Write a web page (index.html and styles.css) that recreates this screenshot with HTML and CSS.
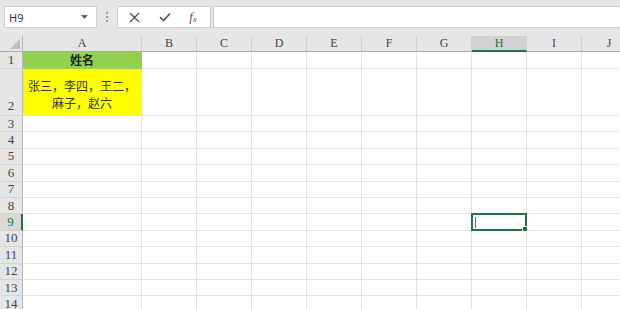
FILE: index.html
```html
<!DOCTYPE html>
<html lang="zh-CN">
<head>
    <meta http-equiv="Content-Type" content="text/html; charset=UTF-8">
    <meta name="viewport" content="width=device-width, initial-scale=1.0">
    <title>工作簿</title>
    <link rel="stylesheet" href="styles.css">
</head>
<body>
    <div class="toolbar">
        <div class="namebox">
            <span>H9</span>
            <svg class="caret" width="7" height="4" viewBox="0 0 7 4"><path d="M0 0h7L3.5 4z" fill="#666" /></svg>
        </div>
        <div class="dots"><i></i><i></i><i></i></div>
        <div class="fbuttons">
            <svg width="11" height="11" viewBox="0 0 11 11">
                <path d="M1 1l9 9M10 1l-9 9" stroke="#555" stroke-width="1.4" fill="none" />
            </svg>
            <svg width="12" height="10" viewBox="0 0 12 10">
                <path d="M1 5l3.5 3.5L11 1.5" stroke="#555" stroke-width="1.6" fill="none" />
            </svg>
            <span class="fx">f<sub>x</sub></span>
        </div>
        <div class="finput"></div>
    </div>

    <div class="sheet" id="sheet">
        <div class="corner"><span class="tri"></span></div>
        <div class="colhead">A</div>
        <div class="colhead">B</div>
        <div class="colhead">C</div>
        <div class="colhead">D</div>
        <div class="colhead">E</div>
        <div class="colhead">F</div>
        <div class="colhead">G</div>
        <div class="colhead active">H</div>
        <div class="colhead">I</div>
        <div class="colhead">J</div>

        <div class="rowhead">1</div>
        <div class="cell title">姓名</div>
        <div class="cell"></div><div class="cell"></div><div class="cell"></div><div class="cell"></div>
        <div class="cell"></div><div class="cell"></div><div class="cell"></div><div class="cell"></div><div class="cell"></div>

        <div class="rowhead bottom">2</div>
        <div class="cell names">张三，李四，王二，<br>麻子，赵六</div>
        <div class="cell"></div><div class="cell"></div><div class="cell"></div><div class="cell"></div>
        <div class="cell"></div><div class="cell"></div><div class="cell"></div><div class="cell"></div><div class="cell"></div>
    </div>

    <script>
        // empty rows 3..14, row 9 holds the selected cell H9
        var sheet = document.getElementById('sheet');
        for (var r = 3; r <= 14; r++) {
            var head = document.createElement('div');
            head.className = r === 9 ? 'rowhead active' : 'rowhead';
            head.textContent = r;
            sheet.appendChild(head);
            for (var c = 0; c < 10; c++) {
                var cell = document.createElement('div');
                cell.className = 'cell';
                if (r === 9 && c === 7) {
                    cell.className = 'cell selected';
                    cell.innerHTML = '<span class="caret-line"></span><span class="handle"></span>';
                }
                sheet.appendChild(cell);
            }
        }
    </script>
</body>
</html>
```

FILE: styles.css
```css
body {
    margin: 0;
    width: 620px;
    height: 309px;
    overflow: hidden;
    background-color: #fff;
    font-family: "Liberation Serif", "Noto Sans CJK SC", serif;
}

.toolbar {
    height: 36px;
    background-color: #e6e6e6;
    display: flex;
    align-items: flex-start;
    padding-top: 6px;
    box-sizing: border-box;
}

.namebox {
    margin-left: 4px;
    width: 93px;
    height: 22px;
    background-color: #fff;
    border: 1px solid #d0d0d0;
    box-sizing: border-box;
    display: flex;
    align-items: center;
    justify-content: space-between;
    padding: 0 8px 0 4px;
    font-family: "Noto Sans", sans-serif;
    font-size: 11px;
    color: #333;
}

.dots {
    width: 20px;
    height: 22px;
    display: flex;
    flex-direction: column;
    align-items: center;
    justify-content: center;
    gap: 2px;
}

    .dots i {
        width: 2px;
        height: 2px;
        background-color: #999;
    }

.fbuttons {
    width: 94px;
    height: 22px;
    background-color: #fff;
    border: 1px solid #d0d0d0;
    box-sizing: border-box;
    display: flex;
    align-items: center;
    justify-content: space-around;
    padding: 0 4px 0 2px;
}

.fx {
    font-family: "Liberation Serif", serif;
    font-style: italic;
    font-size: 13px;
    color: #555;
    line-height: 1;
}

    .fx sub {
        font-size: 9px;
        vertical-align: -1px;
    }

.finput {
    flex: 1;
    margin-left: 2px;
    height: 22px;
    background-color: #fff;
    border: 1px solid #d0d0d0;
    border-right: none;
    box-sizing: border-box;
}

.sheet {
    display: grid;
    grid-template-columns: 23px 119px repeat(9, 55px);
    grid-template-rows: 16px 17px 47px repeat(12, 16.4px);
}

    .sheet > div {
        box-sizing: border-box;
    }

.corner {
    background-color: #e6e6e6;
    border-right: 1px solid #b8b8b8;
    border-bottom: 1px solid #ababab;
    position: relative;
}

.tri {
    position: absolute;
    right: 2px;
    bottom: 2px;
    width: 0;
    height: 0;
    border-left: 10px solid transparent;
    border-bottom: 10px solid #bdbdbd;
}

.colhead {
    background-color: #e6e6e6;
    border-right: 1px solid #cfcfcf;
    border-bottom: 1px solid #ababab;
    font-size: 12px;
    color: #444;
    text-align: center;
    line-height: 15px;
}

    .colhead.active {
        background-color: #d2d2d2;
        color: #217346;
        border-bottom: 2px solid #217346;
    }

.rowhead {
    background-color: #e6e6e6;
    border-right: 1px solid #b8b8b8;
    border-bottom: 1px solid #d4d4d4;
    font-size: 13px;
    color: #444;
    display: flex;
    align-items: center;
    justify-content: center;
}

    .rowhead.bottom {
        align-items: flex-end;
        padding-bottom: 1px;
    }

    .rowhead.active {
        color: #217346;
        border-right: 2px solid #217346;
        background-color: #d8d8d8;
    }

.cell {
    border-right: 1px solid #e1e1e1;
    border-bottom: 1px solid #e1e1e1;
    position: relative;
}

.title {
    background-color: #92d050;
    border-color: #92d050;
    font-family: "Noto Sans CJK SC", sans-serif;
    font-weight: bold;
    font-size: 12px;
    color: #222;
    text-align: center;
    line-height: 16px;
}

.names {
    background-color: #ffff00;
    border-color: #ffff00 #e1e1e1 #e1e1e1 #ffff00;
    font-family: "Noto Sans CJK SC", sans-serif;
    font-size: 12px;
    color: #333;
    text-align: center;
    line-height: 17px;
    display: flex;
    align-items: center;
    justify-content: center;
    padding-top: 3px;
}

.selected {
    border: 2px solid #217346;
    margin: -1px 0 0 -1px;
}

.caret-line {
    position: absolute;
    left: 2px;
    top: 2px;
    width: 1px;
    height: 11px;
    background-color: #666;
}

.handle {
    position: absolute;
    right: -3px;
    bottom: -3px;
    width: 4px;
    height: 4px;
    background-color: #217346;
    border: 1px solid #fff;
}
```
